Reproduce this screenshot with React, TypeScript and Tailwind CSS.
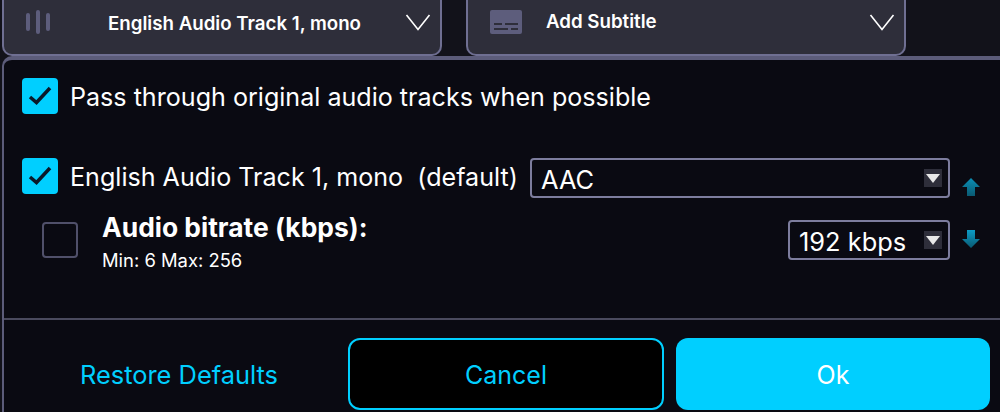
import React from "react";

function TopSelect({ icon, label, center }: { icon: React.ReactNode; label: string; center?: boolean }) {
  return (
    <div className="relative flex h-[56px] w-[440px] items-center rounded-b-[10px] border-x-2 border-b-2 border-[#6f6f92] bg-[#2e2e3a] pb-[10px]">
      <div className={`flex w-[32px] justify-center ${center ? "ml-[18px]" : "ml-[22px]"}`}>{icon}</div>
      <span className={`text-[18.7px] font-semibold text-white ${center ? "ml-[54px] mt-[4px]" : "ml-[24px]"}`}>{label}</span>
      <svg width="26" height="18" viewBox="0 0 26 18" className="absolute right-[9px] top-[13px]" fill="none" stroke="#fff" strokeWidth="1.6">
        <path d="M1.5 2L13 16.5L24.5 2" />
      </svg>
    </div>
  );
}

function CheckBox({ checked }: { checked?: boolean }) {
  if (checked) {
    return (
      <div className="h-[36px] w-[36px] shrink-0 rounded-[4px] bg-[#00cfff]">
        <svg width="36" height="36" viewBox="0 0 36 36" fill="none" stroke="#0a1a2a" strokeWidth="3.5">
          <path d="M8 19L14.5 24.5L28 10" />
        </svg>
      </div>
    );
  }
  return <div className="h-[36px] w-[36px] shrink-0 rounded-[4px] border-2 border-[#50506a]" />;
}

function SelectBox({ value, className }: { value: string; className: string }) {
  return (
    <div className={`flex h-[40px] items-center justify-between rounded-[4px] border-2 border-[#7d7d9e] pl-[9px] pr-[6px] text-[25.4px] text-white ${className}`}>
      <span className="mt-[3px] leading-[32px]">{value}</span>
      <div className="flex h-[18px] w-[18px] items-center justify-center bg-[#2e2e3a]">
        <div className="h-0 w-0 border-x-[7px] border-t-[9px] border-x-transparent border-t-[#e8e8e8]" />
      </div>
    </div>
  );
}

function MoveArrow({ dir }: { dir: "up" | "down" }) {
  return (
    <svg width="18" height="18" viewBox="0 0 18 18" className="ml-[12px] shrink-0">
      <defs>
        <linearGradient id={`arrow-${dir}`} x1="0" y1="0" x2="0" y2="1">
          <stop offset="0" stopColor={dir === "up" ? "#0b8fb5" : "#0c9cc6"} />
          <stop offset="1" stopColor="#0a5a72" />
        </linearGradient>
      </defs>
      {dir === "up" ? (
        <path d="M9 0L18 9H13V18H5V9H0Z" fill={`url(#arrow-${dir})`} />
      ) : (
        <path d="M5 0H13V9H18L9 18L0 9H5Z" fill={`url(#arrow-${dir})`} />
      )}
    </svg>
  );
}

export default function App() {
  return (
    <div className="h-[412px] w-[1000px] overflow-hidden bg-[#12121a] font-['Inter',sans-serif]">
      {/* Top dropdowns */}
      <div className="flex h-[56px] gap-[24px] pl-[2px]">
        <TopSelect
          center
          label="English Audio Track 1, mono"
          icon={
            <svg width="26" height="26" viewBox="0 0 26 26" fill="#5d5d7c">
              <rect x="1" y="4" width="4" height="18" rx="2" />
              <rect x="11" y="1" width="4" height="24" rx="2" />
              <rect x="21" y="4" width="4" height="18" rx="2" />
            </svg>
          }
        />
        <TopSelect
          label="Add Subtitle"
          icon={
            <svg width="32" height="24" viewBox="0 0 32 24">
              <rect width="32" height="24" rx="2" fill="#5d5d7c" />
              <path d="M4 14H12M15 14H28M4 19H18M21 19H28" stroke="#2e2e3a" strokeWidth="2" />
            </svg>
          }
        />
      </div>

      {/* Panel */}
      <div className="ml-[2px] flex h-[356px] flex-col rounded-tl-[10px] border-l-2 border-t-[4px] border-[#5c5c7a] bg-[#0a0a12] text-white">
        <div className="flex items-start gap-[12px] pl-[18px] pt-[18px]">
          <CheckBox checked />
          <span className="mt-[1px] text-[25.1px] leading-[36px]">Pass through original audio tracks when possible</span>
        </div>

        <div className="mt-[43px] flex items-start pl-[18px]">
          <CheckBox checked />
          <span className="ml-[12px] mt-[1px] whitespace-pre text-[25.1px] leading-[36px]">English Audio Track 1, mono  (default)</span>
          <SelectBox value="AAC" className="ml-auto w-[420px]" />
          <div className="mr-[20px] mt-[20px]">
            <MoveArrow dir="up" />
          </div>
        </div>

        <div className="mt-[22px] flex items-start pl-[38px]">
          <div className="mt-[2px]">
            <CheckBox />
          </div>
          <div className="ml-[24px] -mt-[8px] flex flex-col">
            <span className="text-[26.4px] font-bold leading-[30px]">Audio bitrate (kbps):</span>
            <span className="mt-[7px] text-[18.4px] leading-[22px]">Min: 6 Max: 256</span>
          </div>
          <SelectBox value="192 kbps" className="ml-auto w-[162px]" />
          <div className="mr-[20px] mt-[10px]">
            <MoveArrow dir="down" />
          </div>
        </div>

        {/* Footer */}
        <div className="mt-auto flex h-[94px] items-start gap-[12px] border-t-2 border-[#4a4a5e] pt-[18px]">
          <button className="flex h-[72px] w-[332px] items-center justify-center pl-[18px] pt-[3px] text-[25.4px] text-[#00cfff]">
            <span>Restore Defaults</span>
          </button>
          <button className="h-[72px] w-[316px] rounded-[12px] border-2 border-[#00cfff] bg-black pt-[3px] text-[25px] text-[#00cfff]">Cancel</button>
          <button className="h-[72px] w-[314px] rounded-[12px] bg-[#00cfff] pt-[3px] text-[25px] text-white">Ok</button>
        </div>
      </div>
    </div>
  );
}
